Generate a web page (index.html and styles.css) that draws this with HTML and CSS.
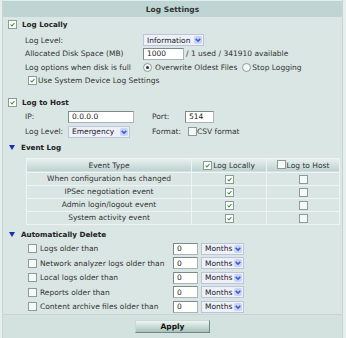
FILE: index.html
```html
<!DOCTYPE html>
<html lang="en">
<head>
    <meta charset="UTF-8">
    <title>Log Settings</title>
    <link rel="stylesheet" href="styles.css">
</head>
<body>
    <div class="panel">
        <div class="title">Log Settings</div>

        <div class="sec-head sec-local">
            <span class="cb"><svg viewBox="0 0 9 9"><path d="M2 4.5 L3.8 6.3 L7 2.6"/></svg></span>
            <span>Log Locally</span>
        </div>
        <div class="row row-first">
            <span class="lbl lbl-local">Log Level:</span>
            <span class="sel sel-info">Information<i class="arr"><svg viewBox="0 0 7 7"><path d="M1.5 2.5 L3.5 4.5 L5.5 2.5"/></svg></i></span>
        </div>
        <div class="row">
            <span class="lbl lbl-local">Allocated Disk Space (MB)</span>
            <span class="inp inp-disk">1000</span>
            <span class="note">/ 1 used / 341910 available</span>
        </div>
        <div class="row row-opts">
            <span class="lbl lbl-full">Log options when disk is full</span>
            <span class="rd on"></span><span class="opt">Overwrite Oldest Files</span>
            <span class="rd"></span><span class="opt">Stop Logging</span>
        </div>
        <div class="row row-sub">
            <span class="cb"><svg viewBox="0 0 9 9"><path d="M2 4.5 L3.8 6.3 L7 2.6"/></svg></span>
            <span>Use System Device Log Settings</span>
        </div>

        <div class="sec-head sec-host">
            <span class="cb"><svg viewBox="0 0 9 9"><path d="M2 4.5 L3.8 6.3 L7 2.6"/></svg></span>
            <span>Log to Host</span>
        </div>
        <div class="row row-host">
            <span class="lbl lbl-ip">IP:</span>
            <span class="inp inp-ip">0.0.0.0</span>
            <span class="lbl lbl-port">Port:</span>
            <span class="inp inp-port">514</span>
        </div>
        <div class="row row-host">
            <span class="lbl lbl-hostlvl">Log Level:</span>
            <span class="sel sel-emerg">Emergency<i class="arr"><svg viewBox="0 0 7 7"><path d="M1.5 2.5 L3.5 4.5 L5.5 2.5"/></svg></i></span>
            <span class="lbl lbl-format">Format:</span>
            <span class="cb empty"></span>
            <span>CSV format</span>
        </div>

        <div class="sec-head sec-tri">
            <span class="tri"></span>
            <span>Event Log</span>
        </div>
        <table class="events">
            <thead>
                <tr>
                    <th class="c-type">Event Type</th>
                    <th class="c-loc"><span class="cb"><svg viewBox="0 0 9 9"><path d="M2 4.5 L3.8 6.3 L7 2.6"/></svg></span>Log Locally</th>
                    <th class="c-host"><span class="cb empty"></span>Log to Host</th>
                </tr>
            </thead>
            <tbody>
                <tr>
                    <td>When configuration has changed</td>
                    <td><span class="cb"><svg viewBox="0 0 9 9"><path d="M2 4.5 L3.8 6.3 L7 2.6"/></svg></span></td>
                    <td><span class="cb empty"></span></td>
                </tr>
                <tr>
                    <td>IPSec negotiation event</td>
                    <td><span class="cb"><svg viewBox="0 0 9 9"><path d="M2 4.5 L3.8 6.3 L7 2.6"/></svg></span></td>
                    <td><span class="cb empty"></span></td>
                </tr>
                <tr>
                    <td>Admin login/logout event</td>
                    <td><span class="cb"><svg viewBox="0 0 9 9"><path d="M2 4.5 L3.8 6.3 L7 2.6"/></svg></span></td>
                    <td><span class="cb empty"></span></td>
                </tr>
                <tr>
                    <td>System activity event</td>
                    <td><span class="cb"><svg viewBox="0 0 9 9"><path d="M2 4.5 L3.8 6.3 L7 2.6"/></svg></span></td>
                    <td><span class="cb empty"></span></td>
                </tr>
            </tbody>
        </table>

        <div class="sec-head sec-tri sec-del">
            <span class="tri"></span>
            <span>Automatically Delete</span>
        </div>
        <div class="del-row">
            <span class="cb empty"></span><span class="lbl lbl-del">Logs older than</span>
            <span class="inp inp-num">0</span>
            <span class="sel sel-mon">Months<i class="arr"><svg viewBox="0 0 7 7"><path d="M1.5 2.5 L3.5 4.5 L5.5 2.5"/></svg></i></span>
        </div>
        <div class="del-row">
            <span class="cb empty"></span><span class="lbl lbl-del">Network analyzer logs older than</span>
            <span class="inp inp-num">0</span>
            <span class="sel sel-mon">Months<i class="arr"><svg viewBox="0 0 7 7"><path d="M1.5 2.5 L3.5 4.5 L5.5 2.5"/></svg></i></span>
        </div>
        <div class="del-row">
            <span class="cb empty"></span><span class="lbl lbl-del">Local logs older than</span>
            <span class="inp inp-num">0</span>
            <span class="sel sel-mon">Months<i class="arr"><svg viewBox="0 0 7 7"><path d="M1.5 2.5 L3.5 4.5 L5.5 2.5"/></svg></i></span>
        </div>
        <div class="del-row">
            <span class="cb empty"></span><span class="lbl lbl-del">Reports older than</span>
            <span class="inp inp-num">0</span>
            <span class="sel sel-mon">Months<i class="arr"><svg viewBox="0 0 7 7"><path d="M1.5 2.5 L3.5 4.5 L5.5 2.5"/></svg></i></span>
        </div>
        <div class="del-row">
            <span class="cb empty"></span><span class="lbl lbl-del">Content archive files older than</span>
            <span class="inp inp-num">0</span>
            <span class="sel sel-mon">Months<i class="arr"><svg viewBox="0 0 7 7"><path d="M1.5 2.5 L3.5 4.5 L5.5 2.5"/></svg></i></span>
        </div>

        <div class="footer">
            <button class="apply">Apply</button>
        </div>
    </div>
</body>
</html>
```

FILE: styles.css
```css
body {
    margin: 0;
    background-color: #e6efed;
    font-family: "DejaVu Sans", Verdana, sans-serif;
    font-size: 7.5px;
    color: #333;
}

.panel {
    width: 341px;
    height: 338px;
    margin-left: 2px;
    background-color: #d9e6e3;
    border-left: 1px solid #c4d5d2;
    border-right: 1px solid #c4d5d2;
    box-sizing: border-box;
    display: flex;
    flex-direction: column;
}

.title {
    height: 17px;
    line-height: 17px;
    text-align: center;
    font-weight: bold;
    color: #333;
    background-color: #bed5d3;
    border-top: 1px solid #e2eeec;
    box-sizing: border-box;
}

/* section headings */
.sec-head {
    display: flex;
    align-items: center;
    height: 14px;
    padding-left: 5px;
    font-size: 7.2px;
    font-weight: bold;
    color: #222;
}

.sec-head .cb {
    margin-right: 5px;
}

.sec-local { margin-top: 1px; }
.sec-host { margin-top: 9px; }
.sec-tri { margin-top: 2px; }
.sec-del { margin-top: 3px; }

.tri {
    width: 0;
    height: 0;
    border-left: 3.5px solid transparent;
    border-right: 3.5px solid transparent;
    border-top: 5px solid #1a2fb0;
    margin: 0 6px 0 1px;
}

.row {
    display: flex;
    align-items: center;
    height: 14px;
    padding-left: 22px;
}

.row-first { margin-top: 2px; }
.row-opts { height: 15px; }
.row-host { margin-top: 1px; }

.row-sub {
    height: 12px;
    padding-left: 25px;
}

.row-sub .cb {
    margin-right: 1px;
}

.lbl {
    display: inline-block;
}

.lbl-local { width: 118px; }
.lbl-full { width: 114px; }
.lbl-ip { width: 43px; }
.lbl-port { width: 33px; margin-left: 18px; }
.lbl-hostlvl { width: 43px; }
.lbl-format { width: 36px; margin-left: 22px; }

/* fake form controls */
.inp {
    display: inline-flex;
    align-items: center;
    height: 12px;
    padding-left: 3px;
    background-color: #fff;
    border: 1px solid #a9b5b3;
    border-top-color: #7d8a88;
    border-left-color: #7d8a88;
    box-sizing: border-box;
    color: #222;
}

.inp-disk { width: 41px; margin-right: 2px; }
.inp-ip { width: 66px; }
.inp-port { width: 29px; }
.inp-num { width: 25px; margin-right: 3px; }

.sel {
    display: inline-flex;
    align-items: center;
    justify-content: space-between;
    height: 12px;
    padding: 0 1px 0 3px;
    background-color: #eef0fa;
    border: 1px solid #bcc4dc;
    box-sizing: border-box;
    color: #222;
}

.sel-info { width: 61px; }
.sel-emerg { width: 62px; }
.sel-mon { width: 43px; }

.arr {
    display: flex;
    width: 8px;
    height: 8px;
    background-color: #c8d4f4;
    border-radius: 2px;
}

.arr svg {
    width: 8px;
    height: 8px;
    fill: none;
    stroke: #3d5cc8;
    stroke-width: 1.3;
}

.cb {
    display: inline-flex;
    width: 9px;
    height: 9px;
    background-color: #fff;
    border: 1px solid #8c9a98;
    box-sizing: border-box;
    flex-shrink: 0;
}

.cb svg {
    width: 7px;
    height: 7px;
    fill: none;
    stroke: #2f9a2c;
    stroke-width: 1.3;
}

.cb.empty {
    background-color: #f7f9f9;
}

.rd {
    display: inline-flex;
    align-items: center;
    justify-content: center;
    width: 9px;
    height: 9px;
    margin: 0 3px 0 4px;
    border: 1px solid #8c9a98;
    border-radius: 50%;
    background-color: #f6f8f8;
    box-sizing: border-box;
}

.rd.on::after {
    content: "";
    width: 3px;
    height: 3px;
    border-radius: 50%;
    background-color: #333;
}

.opt + .rd {
    margin-left: 5px;
    margin-right: 1px;
}

/* event table */
.events {
    width: 314px;
    margin: 4px 0 0 23px;
    border-collapse: collapse;
    font-size: 7.5px;
}

.events th {
    height: 13px;
    padding: 0;
    font-weight: normal;
    color: #333;
    background: linear-gradient(#e9f1ef, #bcd1ce);
    border: 1px solid #eef4f3;
}

.events th .cb {
    vertical-align: -1px;
    margin-right: 1px;
}

.events td {
    height: 12px;
    padding: 0;
    text-align: center;
    border: 1px solid #eef4f3;
    color: #333;
}

.events td .cb {
    vertical-align: middle;
}

.c-type { width: 164px; }
.c-loc { width: 74px; }

.del-row {
    display: flex;
    align-items: center;
    height: 15px;
    padding-left: 25px;
}

.del-row .cb {
    margin-right: 3px;
}

.lbl-del { width: 133px; }

.footer {
    margin-top: auto;
    height: 24px;
    border-top: 1px solid #c4d5d2;
    background-color: #d4e2df;
    display: flex;
    justify-content: center;
    align-items: center;
}

.apply {
    width: 75px;
    height: 13px;
    padding: 0;
    font-family: "DejaVu Sans", Verdana, sans-serif;
    font-size: 7.5px;
    font-weight: bold;
    color: #111;
    background: linear-gradient(#eef5f2, #a9c2bb);
    border: 1px solid #6f8a84;
    border-top-color: #c9d9d5;
    border-left-color: #c9d9d5;
}
```
